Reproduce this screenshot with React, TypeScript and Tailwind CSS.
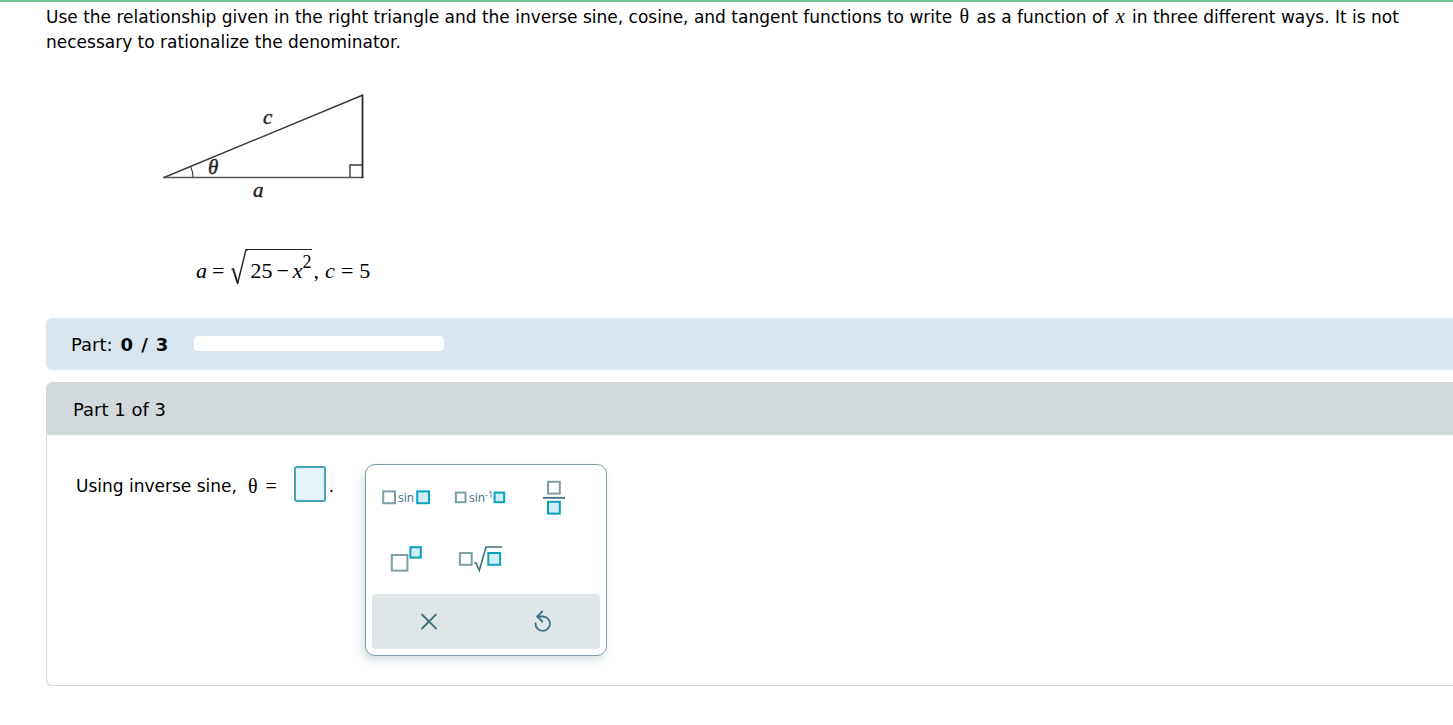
import type { ReactNode } from "react";

const GRAY = "#7d9fa6";
const CYAN = "#0aa2bd";
const INK = "#3f7080";

type BoxProps = { x: number; y: number; size: number; active?: boolean };

function Box({ x, y, size, active = false }: BoxProps) {
  return (
    <rect
      x={x}
      y={y}
      width={size}
      height={size}
      fill={active ? "#cfeef3" : "#ffffff"}
      stroke={active ? CYAN : GRAY}
      strokeWidth={2}
    />
  );
}

function Key({ label, children }: { label: string; children: ReactNode }) {
  return (
    <button type="button" aria-label={label} className="h-[62px] w-[74px]">
      <svg viewBox="0 0 74 62" className="block h-full w-full" aria-hidden="true">
        {children}
      </svg>
    </button>
  );
}

function Triangle() {
  return (
    <svg
      viewBox="0 0 204 112"
      className="ml-[115px] mt-[37px] block h-[112px] w-[204px]"
      role="img"
      aria-label="Right triangle with angle theta, adjacent side a and hypotenuse c"
    >
      <g fill="none" stroke="#3a3a3a" strokeWidth="1.4">
        <path d="M3 85.5 L202 3" />
        <path d="M2 85.5 H202.5" stroke="#555" strokeWidth="1.7" />
        <path d="M201.5 2.5 V86" stroke="#222" strokeWidth="1.7" />
        <path d="M189 85 V73 H201" />
        <path d="M29.5 74 Q32 80 32 85" strokeWidth="1.1" />
      </g>
      <g className="font-['Liberation_Serif',serif] text-[21px] italic" fill="#222" stroke="#222" strokeWidth="0.4">
        <text x="102" y="32">c</text>
        <text x="47" y="82">θ</text>
        <text x="92" y="105">a</text>
      </g>
    </svg>
  );
}

function Formula() {
  return (
    <div className="ml-[150px] mt-[44px] flex h-[40px] items-start font-['Liberation_Serif',serif] text-[22px] leading-[46px]">
      <i>a</i>
      <span className="ml-[5px]">=</span>
      <svg viewBox="0 0 18 38" className="ml-[6px] h-[38px] w-[18px]" fill="none" stroke="#222" aria-hidden="true">
        <path d="M1.5 21.5 L3.5 20.5" strokeWidth="1.2" />
        <path d="M3 20.5 L7.5 35" strokeWidth="2" />
        <path d="M7.5 36 L16 1.7 H18" strokeWidth="1.4" />
      </svg>
      <span className="mt-px flex h-[38px] border-t border-[#222] pl-[2px] leading-[42px]">
        <span>25</span>
        <span className="ml-[4px]">−</span>
        <i className="ml-[4px]">x</i>
        <span className="-mt-[9px] text-[18px]">2</span>
      </span>
      <span className="ml-[2px]">,</span>
      <i className="ml-[6px]">c</i>
      <span className="ml-[6px]">=</span>
      <span className="ml-[6px]">5</span>
    </div>
  );
}

function Keypad() {
  return (
    <div className="w-[242px] rounded-[10px] border border-[#7f9da6] bg-white shadow-[-3px_5px_8px_rgba(60,100,115,0.2)]">
      <div className="grid grid-cols-[74px_74px_74px] pb-[3px] pl-[3px] pt-[2px]">
        <Key label="Sine">
          <Box x={14.2} y={24.4} size={11.8} />
          <text x="29" y="35" fill={INK} className="font-['Open_Sans',sans-serif] text-[12px]">sin</text>
          <Box x={48.2} y={24.4} size={11.8} active />
        </Key>
        <Key label="Inverse sine">
          <Box x={12.9} y={25.6} size={9.6} />
          <text x="26" y="35" fill={INK} className="font-['Open_Sans',sans-serif] text-[12px]">sin</text>
          <text x="42" y="31" fill={INK} className="font-['Open_Sans',sans-serif] text-[9px]">-1</text>
          <Box x={51.6} y={25.6} size={9.6} active />
        </Key>
        <Key label="Fraction">
          <Box x={31} y={14.8} size={11.8} />
          <path d="M26 30.8 H48" stroke={INK} strokeWidth="1.8" />
          <Box x={31} y={34.8} size={11.8} active />
        </Key>
        <Key label="Exponent">
          <Box x={22.8} y={26} size={15.6} />
          <Box x={41.4} y={18.2} size={10.4} active />
        </Key>
        <Key label="Square root">
          <Box x={16.9} y={24} size={11.8} />
          <path d="M31.5 34.5 L33 34 L36.3 41.5 L43 18 H59" fill="none" stroke={INK} strokeWidth="1.6" />
          <Box x={45.3} y={24} size={11.8} active />
        </Key>
      </div>
      <div className="mx-[6px] mb-[6px] grid h-[55px] grid-cols-2 rounded bg-[#dfe6e8]">
        <button type="button" aria-label="Clear" className="flex items-center justify-center">
          <svg viewBox="0 0 20 20" className="h-5 w-5" fill="none" stroke={INK} strokeWidth="1.8" strokeLinecap="round" aria-hidden="true">
            <path d="M3 2.5 L17 16.5 M17 2.5 L3 16.5" />
          </svg>
        </button>
        <button type="button" aria-label="Reset" className="flex items-center justify-center">
          <svg viewBox="0 0 20 24" className="h-6 w-5" fill="none" stroke={INK} strokeWidth="1.8" strokeLinecap="round" strokeLinejoin="round" aria-hidden="true">
            <path d="M9.3 1.5 L4.3 6.5 L9.3 11.5" />
            <path d="M4.5 6.5 H10 A7.2 7.2 0 1 1 2.5 13.5" />
          </svg>
        </button>
      </div>
    </div>
  );
}

export default function App() {
  return (
    <main className="overflow-hidden border-t-2 border-[#74c395] bg-white pl-[46px] pt-[3px] font-['DejaVu_Sans',sans-serif] text-[17px] leading-[25px] text-black">
      <p>
        Use the relationship given in the right triangle and the inverse sine, cosine, and tangent functions to write{" "}
        <span className="mx-[2px] font-['Liberation_Serif',serif] text-[20px] leading-none">θ</span> as a function of{" "}
        <i className="mx-[2px] font-['Liberation_Serif',serif] text-[20px] leading-none">x</i> in three different ways. It is not
        necessary to rationalize the denominator.
      </p>
      <Triangle />
      <Formula />

      <section className="mt-[30px] flex h-[52px] items-center rounded-l-md bg-[#dae6ef] pl-[25px] text-[18px]">
        <span className="pt-px">Part:</span>
        <b className="ml-2 flex gap-2 pt-px">
          <span>0</span>
          <span>/</span>
          <span>3</span>
        </b>
        <div className="mb-px ml-[26px] h-[15px] w-[250px] rounded bg-white" role="progressbar" aria-label="Progress" aria-valuemin={0} aria-valuemax={3} aria-valuenow={0} />
      </section>

      <section className="mt-3 rounded-l-md border-b border-l border-[#d0d9dc]">
        <h2 className="flex h-[53px] items-center rounded-tl-md bg-[#d1d9dc] pl-[26px] pt-px text-[18px]">Part 1 of 3</h2>
        <div className="flex items-start pb-[29px] pl-[29px] pt-[29px]">
          <label htmlFor="answer" className="mt-[10px] flex whitespace-nowrap">
            Using inverse sine,
            <span className="ml-[11px] flex gap-[8px] font-['Liberation_Serif',serif] text-[20px]">
              <span>θ</span>
              <span>=</span>
            </span>
          </label>
          <input id="answer" type="text" className="ml-[17px] mt-[2px] h-[36px] w-[32px] rounded-[3px] border-2 border-[#46a4b4] bg-[#e4f3f8] text-center outline-none" />
          <span className="ml-[3px] mr-[31px] mt-[10px]">.</span>
          <Keypad />
        </div>
      </section>
    </main>
  );
}
